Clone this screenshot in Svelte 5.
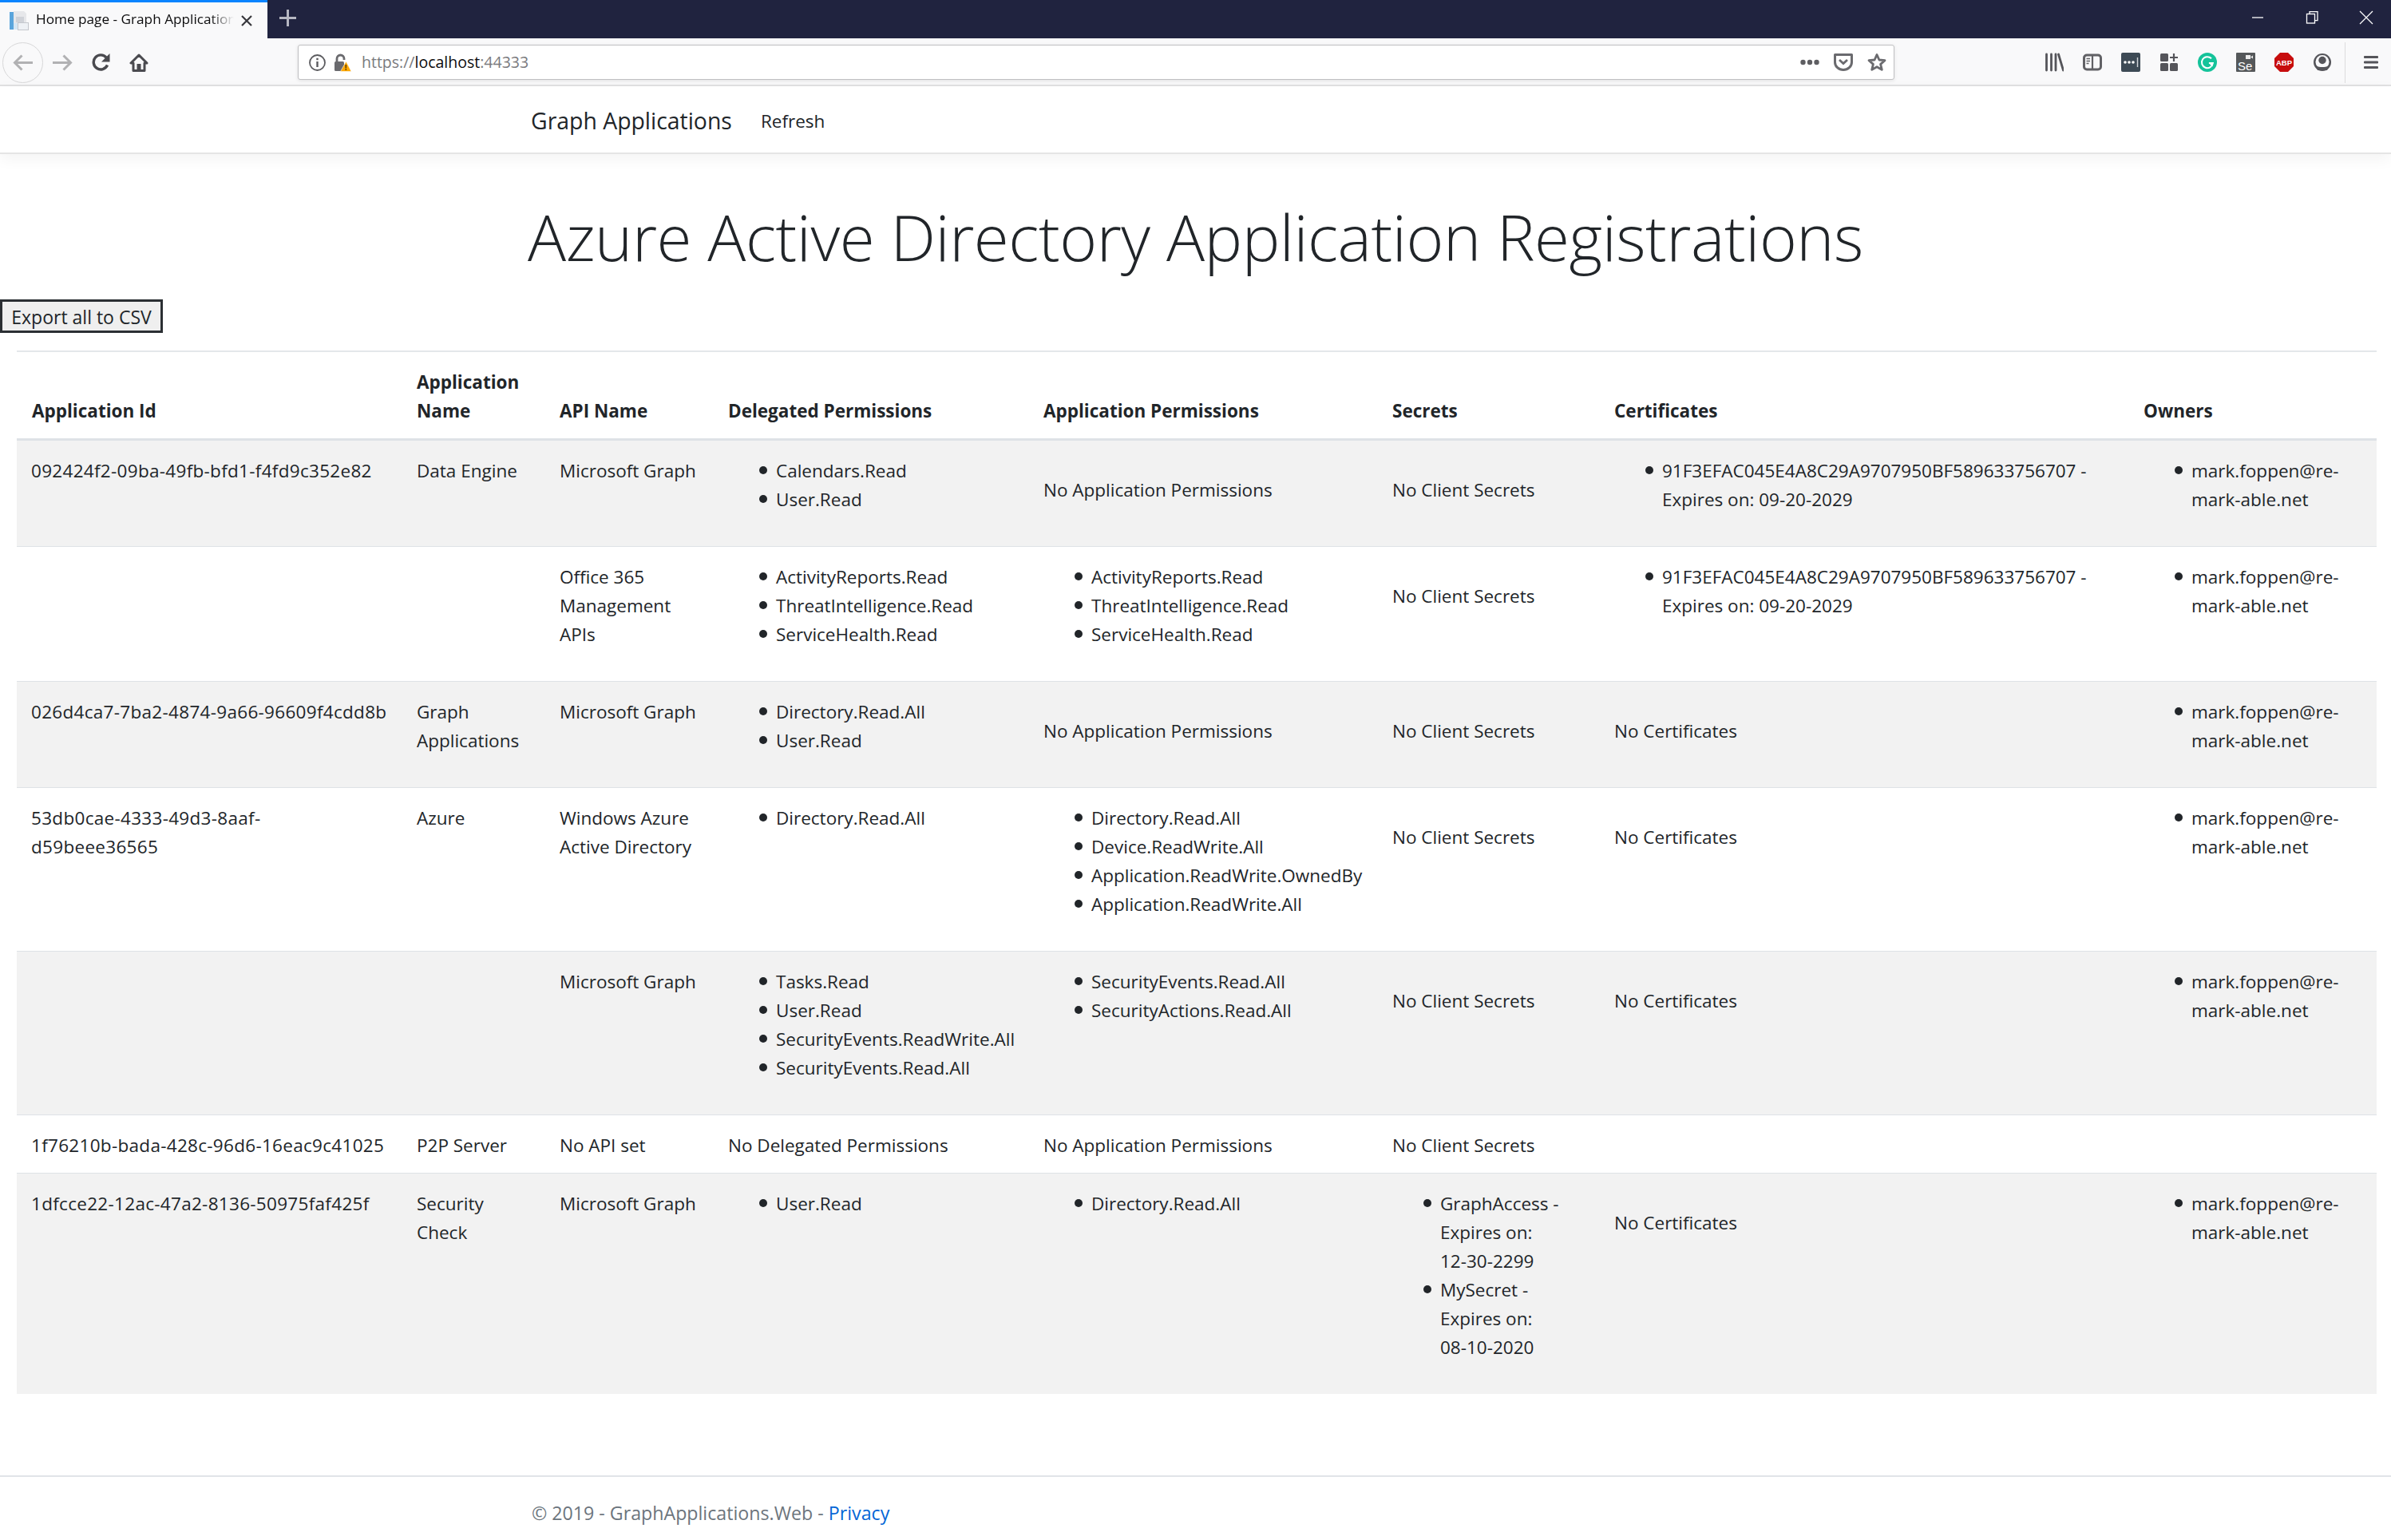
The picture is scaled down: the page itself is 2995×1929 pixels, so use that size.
<script>
  const noApp = 'No Application Permissions';
  const noSecret = 'No Client Secrets';
  const noCert = 'No Certificates';
  const owner = ['mark.foppen@re-mark-able.net'];
  const cert = ['91F3EFAC045E4A8C29A9707950BF589633756707 - Expires on: 09-20-2029'];

  const rows = [
    { id: '092424f2-09ba-49fb-bfd1-f4fd9c352e82', name: 'Data Engine', api: 'Microsoft Graph', del: ['Calendars.Read', 'User.Read'], app: noApp, sec: noSecret, cert, owners: owner, shade: true },
    { id: '', name: '', api: 'Office 365 Management APIs', del: ['ActivityReports.Read', 'ThreatIntelligence.Read', 'ServiceHealth.Read'], app: ['ActivityReports.Read', 'ThreatIntelligence.Read', 'ServiceHealth.Read'], sec: noSecret, cert, owners: owner },
    { id: '026d4ca7-7ba2-4874-9a66-96609f4cdd8b', name: 'Graph Applications', api: 'Microsoft Graph', del: ['Directory.Read.All', 'User.Read'], app: noApp, sec: noSecret, cert: noCert, owners: owner, shade: true },
    { id: '53db0cae-4333-49d3-8aaf-\nd59beee36565', name: 'Azure', api: 'Windows Azure Active Directory', del: ['Directory.Read.All'], app: ['Directory.Read.All', 'Device.ReadWrite.All', 'Application.ReadWrite.OwnedBy', 'Application.ReadWrite.All'], sec: noSecret, cert: noCert, owners: owner },
    { id: '', name: '', api: 'Microsoft Graph', del: ['Tasks.Read', 'User.Read', 'SecurityEvents.ReadWrite.All', 'SecurityEvents.Read.All'], app: ['SecurityEvents.Read.All', 'SecurityActions.Read.All'], sec: noSecret, cert: noCert, owners: owner, shade: true },
    { id: '1f76210b-bada-428c-96d6-16eac9c41025', name: 'P2P Server', api: 'No API set', del: 'No Delegated Permissions', app: noApp, sec: noSecret, cert: '', owners: '', plain: true },
    { id: '1dfcce22-12ac-47a2-8136-50975faf425f', name: 'Security Check', api: 'Microsoft Graph', del: ['User.Read'], app: ['Directory.Read.All'], sec: [['GraphAccess - Expires on: ', '12-30-2299'], ['MySecret - Expires on: ', '08-10-2020']], cert: noCert, owners: owner, shade: true }
  ];

  const cols = [482, 179, 211, 395, 437, 278, 663, 311];
</script>

{#snippet cell(value)}
  {#if Array.isArray(value)}
    <td>
      <ul>
        {#each value as item}
          {#if Array.isArray(item)}
            <li>{item[0]}<span class="date">{item[1]}</span></li>
          {:else}
            <li>{item}</li>
          {/if}
        {/each}
      </ul>
    </td>
  {:else}
    <td class="mid">{value}</td>
  {/if}
{/snippet}

<div class="tabbar">
  <div class="tab">
    <svg class="favicon" width="24" height="24" viewBox="0 0 24 24">
      <rect x="0" y="1" width="5" height="22" fill="#5aa5dc"/>
      <path d="M5 0h13l3 3v12H5z" fill="#e6e7ea"/>
      <path d="M8 7h10v7H8z" fill="#cfd2d8"/>
      <rect x="10.500" y="14.500" width="13" height="9" fill="#eef1f5" stroke="#c4c7cd"/>
      <path d="M5 15h5v8H5z" fill="#d4e6f4"/>
    </svg>
    <span class="tab-title">Home page - Graph Applications</span>
    <svg class="tab-close" width="14" height="14" viewBox="0 0 14 14"><path d="M1 1l12 12M13 1L1 13" stroke="#38383d" stroke-width="2.200"/></svg>
  </div>
  <svg class="new-tab" width="21" height="21" viewBox="0 0 21 21"><path d="M10.500 0v21M0 10.500h21" stroke="#b6b7c2" stroke-width="3"/></svg>
  <div class="win-controls">
    <svg width="18" height="18" viewBox="0 0 18 18"><path d="M2 9h14" stroke="#fff" stroke-width="1.300"/></svg>
    <svg width="18" height="18" viewBox="0 0 18 18"><path d="M6 4V1.700h10v11h-3" fill="none" stroke="#fff" stroke-width="1.300"/><rect x="2.500" y="4.500" width="10" height="11.500" fill="none" stroke="#fff" stroke-width="1.300"/></svg>
    <svg width="18" height="18" viewBox="0 0 18 18"><path d="M1 1l16 16M17 1L1 17" stroke="#fff" stroke-width="1.200"/></svg>
  </div>
</div>

<div class="toolbar">
  <div class="nav-btns">
    <span class="back">
      <svg width="25" height="21" viewBox="0 0 25 21"><path d="M25 10.500H3M11.500 1.500l-9 9 9 9" fill="none" stroke="#b1b1b3" stroke-width="3"/></svg>
    </span>
    <svg class="fwd" width="25" height="21" viewBox="0 0 25 21"><path d="M0 10.500h22M13.500 1.500l9 9-9 9" fill="none" stroke="#b1b1b3" stroke-width="3"/></svg>
    <svg class="reload" width="23" height="22" viewBox="0 0 23 22"><path d="M19.500 14.500a9 9 0 1 1-1.300-9.300" fill="none" stroke="#4a4a4f" stroke-width="3.400"/><path d="M22.500 0v10.500H12z" fill="#4a4a4f"/></svg>
    <svg class="home" width="24" height="23" viewBox="0 0 24 23"><path d="M12 2L2 12h3v9.500h14V12h3z" fill="none" stroke="#4a4a4f" stroke-width="3" stroke-linejoin="round"/><rect x="9.500" y="13" width="5" height="8" fill="#4a4a4f"/></svg>
  </div>
  <div class="urlbar">
    <svg class="info" width="21" height="21" viewBox="0 0 21 21"><circle cx="10.500" cy="10.500" r="9.500" fill="none" stroke="#5b5b5f" stroke-width="1.800"/><path d="M10.500 9v7M10.500 4.800v2.500" stroke="#5b5b5f" stroke-width="2.400"/></svg>
    <svg class="lock" width="21" height="23" viewBox="0 0 21 23"><path d="M3 11V6.500a4.500 4.500 0 0 1 9 0V8" fill="none" stroke="#6a6a6e" stroke-width="2.800"/><rect x="0" y="10" width="12" height="12" rx="1.500" fill="#6a6a6e"/><path d="M14.500 10L21 22.500H7.500z" fill="#ffa800" stroke="#f9f9fa" stroke-width="0.600"/><path d="M14.300 14v4.400M14.300 19.300v1.700" stroke="#5a3b00" stroke-width="1.500"/></svg>
    <span class="url"><span class="dim">https://</span>localhost<span class="dim">:44333</span></span>
    <span class="url-spacer"></span>
    <svg class="dots" width="24" height="8" viewBox="0 0 24 8"><circle cx="3.500" cy="4" r="3.200" fill="#5e5e62"/><circle cx="12" cy="4" r="3.200" fill="#5e5e62"/><circle cx="20.500" cy="4" r="3.200" fill="#5e5e62"/></svg>
    <svg class="pocket" width="24" height="22" viewBox="0 0 24 22"><path d="M1.500 1.500h21v9.500a10.500 9.500 0 0 1-21 0z" fill="none" stroke="#6a6a6e" stroke-width="3" stroke-linejoin="round"/><path d="M7 8l5 4.500L17 8" fill="none" stroke="#6a6a6e" stroke-width="2.800"/></svg>
    <svg width="24" height="24" viewBox="0 0 24 24"><path d="M12 2.500l2.900 6.500 7.100.7-5.400 4.700 1.700 7-6.300-3.700-6.300 3.700 1.700-7L2 9.700 9.100 9z" fill="none" stroke="#6a6a6e" stroke-width="2.800" stroke-linejoin="round"/></svg>
  </div>
  <div class="ext-icons">
    <svg width="24" height="24" viewBox="0 0 24 24"><path d="M2.500 2v20M8.500 2v20M14 2v20M17.500 2l6 20" stroke="#55555a" stroke-width="2.800" stroke-linecap="round"/></svg>
    <svg width="24" height="24" viewBox="0 0 24 24"><rect x="1.500" y="3" width="21" height="18" rx="3.500" fill="none" stroke="#616165" stroke-width="3"/><path d="M12 3v18" stroke="#616165" stroke-width="2.200"/><path d="M4.500 7.500h4.500M4.500 10.500h4.500M4.500 13.500h3" stroke="#616165" stroke-width="1.500"/></svg>
    <svg width="24" height="24" viewBox="0 0 24 24"><rect width="24" height="24" rx="2" fill="#3d4a55"/><circle cx="5" cy="12" r="1.800" fill="#fff"/><circle cx="10" cy="12" r="1.800" fill="#fff"/><circle cx="15" cy="12" r="1.800" fill="#fff"/><path d="M20.500 6v12" stroke="#d0d4d8" stroke-width="1.400"/></svg>
    <svg width="24" height="24" viewBox="0 0 24 24"><rect x="1" y="1" width="10" height="10" rx="1.500" fill="#55555a"/><rect x="1" y="13" width="10" height="10" rx="1.500" fill="#55555a"/><rect x="13" y="13" width="10" height="10" rx="1.500" fill="#55555a"/><path d="M18 1v10M13 6h10" stroke="#55555a" stroke-width="2.200"/></svg>
    <svg width="24" height="24" viewBox="0 0 24 24"><circle cx="12" cy="12" r="12" fill="#15c39a"/><path d="M17 7.300A7 7 0 1 0 18.900 13h-5" fill="none" stroke="#fff" stroke-width="2"/><path d="M18.500 12v5.500l-3.500-3z" fill="#fff"/></svg>
    <svg width="24" height="24" viewBox="0 0 24 24"><rect width="24" height="24" rx="1" fill="#55585a"/><rect x="12" y="3" width="6" height="5" fill="#ececec"/><path d="M18 5.500l3-2v4z" fill="#ececec"/><text x="2" y="21.500" class="se">Se</text></svg>
    <svg width="24" height="24" viewBox="0 0 24 24"><path d="M7 0h10l7 7v10l-7 7H7l-7-7V7z" fill="#c70d0d"/><text x="12" y="16" class="abp">ABP</text></svg>
    <svg width="24" height="24" viewBox="0 0 24 24"><circle cx="12" cy="12" r="11" fill="#55555a"/><circle cx="12" cy="11.500" r="8.500" fill="#f9f9fa"/><circle cx="12" cy="9.500" r="4.700" fill="#55555a"/><path d="M4 16.500c3 1.300 5 1.500 8 1.500s5-.2 8-1.500l-2 5.500H6z" fill="#55555a"/></svg>
  </div>
  <span class="divider"></span>
  <svg class="menu" width="18" height="18" viewBox="0 0 18 18"><path d="M1 2.500h16M1 9h16M1 15.500h16" stroke="#55555a" stroke-width="2.800" stroke-linecap="round"/></svg>
</div>

<nav class="navbar">
  <a class="brand" href="/">Graph Applications</a>
  <a class="nav-link" href="/">Refresh</a>
</nav>

<main>
  <h1>Azure Active Directory Application Registrations</h1>
  <button class="export">Export all to CSV</button>
  <table>
    <colgroup>
      {#each cols as w}<col style="width: {w}px"/>{/each}
    </colgroup>
    <thead>
      <tr>
        <th>Application Id</th>
        <th>Application Name</th>
        <th>API Name</th>
        <th>Delegated Permissions</th>
        <th>Application Permissions</th>
        <th>Secrets</th>
        <th>Certificates</th>
        <th>Owners</th>
      </tr>
    </thead>
    <tbody>
      {#each rows as r}
        <tr class:shade={r.shade} class:plain={r.plain}>
          <td class="app-id">{r.id}</td>
          <td>{r.name}</td>
          <td>{r.api}</td>
          {#if Array.isArray(r.del)}
            {@render cell(r.del)}
          {:else}
            <td>{r.del}</td>
          {/if}
          {@render cell(r.app)}
          {@render cell(r.sec)}
          {@render cell(r.cert)}
          {@render cell(r.owners)}
        </tr>
      {/each}
    </tbody>
  </table>
</main>

<footer>
  <div>© 2019 - GraphApplications.Web - <a href="/">Privacy</a></div>
</footer>

<style>
  :global(body) {
    margin: 0;
    background: #fff;
    color: #212529;
    font-family: "Open Sans", "Liberation Sans", sans-serif;
    font-size: 22.5px;
    line-height: 36px;
  }
  .tabbar {
    height: 48px;
    background: #20233f;
    display: flex;
    align-items: center;
  }
  .tab {
    width: 335px;
    height: 48px;
    box-sizing: border-box;
    background: #f9f9fa;
    border-top: 3px solid #0a84ff;
    display: flex;
    align-items: center;
    padding: 0 19px 0 12px;
    font-size: 17.2px;
    line-height: 24px;
    color: #0c0c0d;
  }
  .favicon {
    flex: none;
    margin-right: 9px;
  }
  .tab-title {
    flex: 1;
    overflow: hidden;
    white-space: nowrap;
    margin-bottom: 3px;
    -webkit-mask-image: linear-gradient(to right, #000 88%, transparent);
    mask-image: linear-gradient(to right, #000 88%, transparent);
  }
  .tab-close {
    flex: none;
    margin-left: 9px;
  }
  .new-tab {
    margin: 0 0 4px 15px;
  }
  .win-controls {
    margin-left: auto;
    display: flex;
    gap: 50px;
    margin: 0 22px 4px auto;
  }
  .toolbar {
    height: 60px;
    box-sizing: border-box;
    background: #f9f9fa;
    border-bottom: 2px solid #e1e1e2;
    display: flex;
    align-items: center;
    padding: 2px 0 0 3px;
  }
  .nav-btns {
    display: flex;
    align-items: center;
    width: 370px;
    flex: none;
  }
  .back {
    width: 51px;
    height: 51px;
    box-sizing: border-box;
    border: 1px solid #d7d7d8;
    border-radius: 50%;
    display: flex;
    align-items: center;
    justify-content: center;
  }
  .fwd {
    margin-left: 12px;
  }
  .reload {
    margin-left: 24px;
  }
  .home {
    margin-left: 24px;
  }
  .urlbar {
    width: 2000px;
    height: 44px;
    box-sizing: border-box;
    background: #fff;
    border: 1px solid #c0c0c2;
    border-radius: 3px;
    box-shadow: 0 1px 4px rgba(0, 0, 0, 0.1);
    display: flex;
    align-items: center;
    padding: 0 9px 0 13px;
    font-size: 19.5px;
    flex: none;
  }
  .info {
    margin-right: 11px;
  }
  .lock {
    margin-right: 13px;
  }
  .url {
    color: #0c0c0d;
  }
  .dim {
    color: #7a7a7e;
  }
  .url-spacer {
    flex: 1;
  }
  .dots,
  .pocket {
    margin-right: 18px;
  }
  .ext-icons {
    display: flex;
    gap: 24px;
    margin-left: 188px;
    align-items: center;
  }
  .se {
    font-family: "Liberation Sans", sans-serif;
    font-size: 15px;
    fill: #fff;
  }
  .abp {
    font-family: "Liberation Sans", sans-serif;
    font-size: 9.500px;
    font-weight: 700;
    fill: #fff;
    text-anchor: middle;
  }
  .divider {
    width: 1px;
    height: 51px;
    background: #dcdcdd;
    margin-left: 16px;
  }
  .menu {
    margin-left: 23px;
  }
  .navbar {
    height: 85px;
    box-sizing: border-box;
    border-bottom: 2px solid #e5e5e5;
    box-shadow: 0 6px 18px rgba(0, 0, 0, 0.05);
    display: flex;
    align-items: center;
    padding: 2px 0 0 665px;
  }
  .brand {
    font-size: 28.400px;
    color: #212529;
    text-decoration: none;
    margin-right: 36px;
  }
  .nav-link {
    color: #212529;
    text-decoration: none;
    padding-top: 2px;
  }
  h1 {
    margin: 53px 0 29px;
    font-size: 80px;
    font-weight: 300;
    letter-spacing: -0.46px;
    line-height: 100px;
    text-align: center;
    color: #212529;
  }
  .export {
    display: block;
    width: 204px;
    height: 42px;
    padding: 2px 0 0;
    border: 3px solid #2b2f33;
    background: #efefef;
    color: #212529;
    font: inherit;
    font-size: 23px;
    line-height: 34px;
  }
  table {
    margin: 22px 18px 0 21px;
    width: 2956px;
    table-layout: fixed;
    border-collapse: collapse;
  }
  th {
    text-align: left;
    vertical-align: bottom;
    padding: 20px 18px 16px 19px;
    font-weight: 700;
    border-top: 2px solid #e4e7ea;
    border-bottom: 3px solid #dee2e6;
  }
  td {
    padding: 20px 18px 16px 19px;
    vertical-align: top;
    border-top: 1px solid #dee2e6;
  }
  td.app-id {
    white-space: pre;
    letter-spacing: 0.3px;
    padding-left: 18px;
  }
  td.mid {
    padding-top: 44px;
  }
  tr.plain td.mid {
    padding-top: 20px;
  }
  tr.shade td {
    background: #f2f2f2;
  }
  ul {
    margin: 0 0 24px;
    padding-left: 60px;
    list-style: none;
  }
  li {
    position: relative;
  }
  li::before {
    content: "";
    position: absolute;
    left: -21px;
    top: 12px;
    width: 10px;
    height: 10px;
    border-radius: 50%;
    background: #212529;
  }
  .date {
    white-space: nowrap;
  }
  footer {
    margin-top: 102px;
    border-top: 2px solid #e1e4e8;
    color: #6c757d;
    height: 81px;
    box-sizing: border-box;
    padding: 27px 0 0 666px;
    font-size: 23.2px;
  }
  footer a {
    color: #0366d6;
    text-decoration: none;
  }
</style>
